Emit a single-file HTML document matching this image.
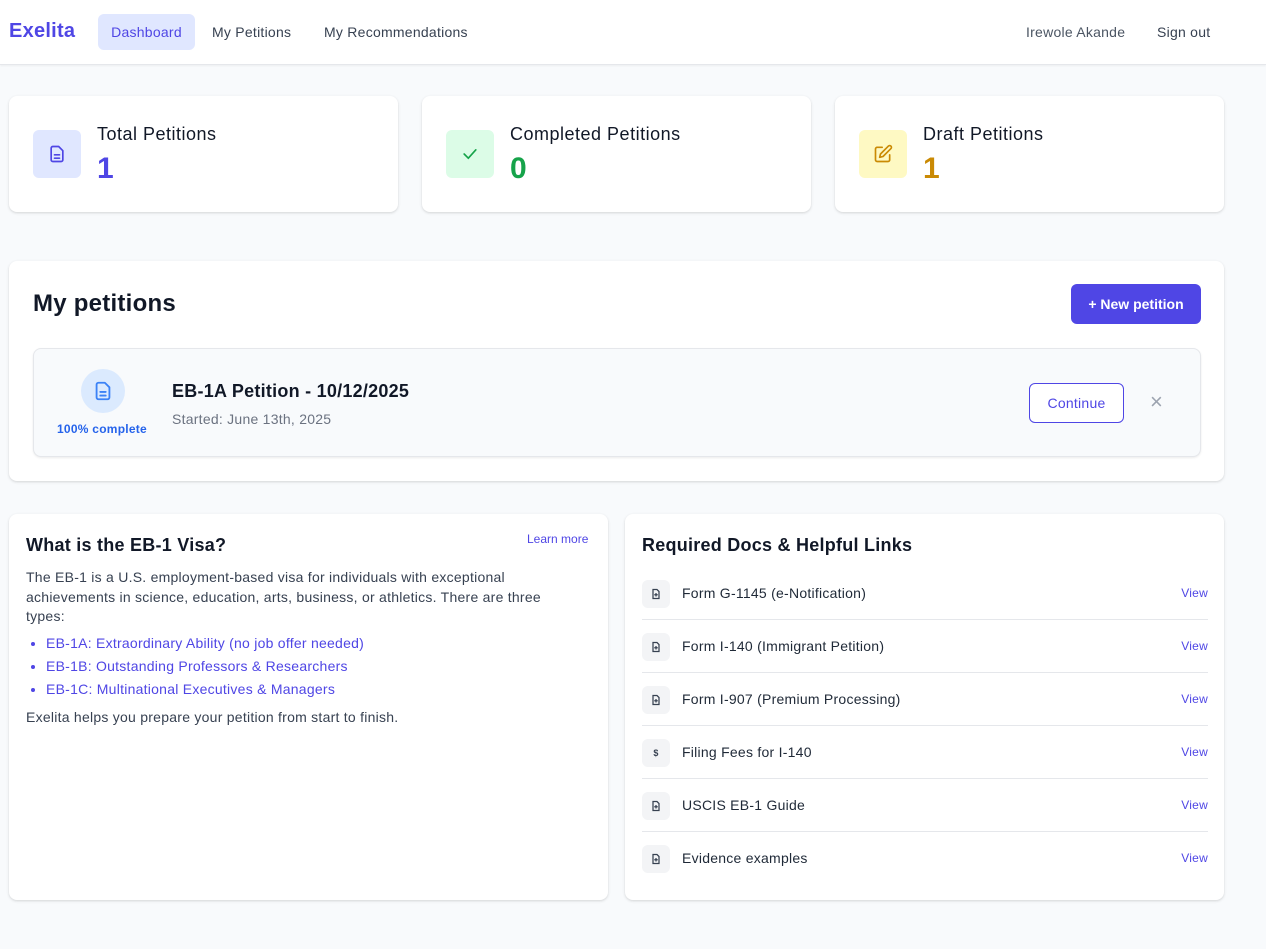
<!DOCTYPE html>
<html><head><meta charset="utf-8"><style>
*{box-sizing:border-box;margin:0;padding:0}
body{width:1266px;height:949px;background:#f8fafc;font-family:"Liberation Sans",sans-serif;color:#111827;position:relative;overflow:hidden;letter-spacing:.25px}
.nav{position:absolute;left:0;top:0;width:1266px;height:65px;background:#fff;border-bottom:1px solid #e5e7eb;box-shadow:0 1px 2px rgba(0,0,0,.05)}
.abs{position:absolute}
.card{position:absolute;background:#fff;border-radius:8px;box-shadow:0 1px 3px rgba(0,0,0,.1),0 1px 2px rgba(0,0,0,.06)}
.ico{position:absolute;width:48px;height:48px;border-radius:6px;display:flex;align-items:center;justify-content:center}
.st{position:absolute;font-size:18px;color:#111827;letter-spacing:.5px}
.sn{position:absolute;font-size:30px;font-weight:bold}
.row{position:absolute;left:642px;width:566px;height:53px;border-bottom:1px solid #e5e7eb}
.row .i{position:absolute;left:0;top:13px;width:28px;height:28px;border-radius:6px;background:#f3f4f6;display:flex;align-items:center;justify-content:center;font-size:9px;font-weight:bold;color:#374151}
.row .t{position:absolute;left:40px;top:18px;font-size:14px;color:#1f2937}
.row .v{position:absolute;right:0;top:19px;font-size:12px;color:#4f46e5}
</style></head><body>
<div class="nav">
<div class="abs" style="left:9px;top:20px;font-size:20px;font-weight:bold;color:#4f46e5">Exelita</div>
<div class="abs" style="left:98px;top:14px;width:97px;height:36px;background:#e0e7ff;border-radius:6px;color:#4f46e5;font-size:14px;text-align:center;line-height:36px">Dashboard</div>
<div class="abs" style="left:212px;top:24px;font-size:14px;color:#374151">My Petitions</div>
<div class="abs" style="left:324px;top:24px;font-size:14px;color:#374151">My Recommendations</div>
<div class="abs" style="left:1026px;top:24px;font-size:14px;color:#4b5563">Irewole Akande</div>
<div class="abs" style="left:1157px;top:24px;font-size:14px;color:#374151">Sign out</div>
</div>

<div class="card" style="left:9px;top:96px;width:389px;height:116px">
<div class="ico" style="left:24px;top:34px;background:#e0e7ff"><svg width="20" height="20" viewBox="0 0 24 24" fill="none" stroke="#4f46e5" stroke-width="2" stroke-linecap="round" stroke-linejoin="round"><path d="M14 3H7a2 2 0 0 0-2 2v14a2 2 0 0 0 2 2h10a2 2 0 0 0 2-2V8z"/><path d="M9 13h6M9 17h6"/></svg></div>
<div class="st" style="left:88px;top:28px">Total Petitions</div>
<div class="sn" style="left:88px;top:56px;color:#4f46e5">1</div></div>
<div class="card" style="left:422px;top:96px;width:389px;height:116px">
<div class="ico" style="left:24px;top:34px;background:#dcfce7"><svg width="20" height="20" viewBox="0 0 24 24" fill="none" stroke="#16a34a" stroke-width="2" stroke-linecap="round"><path d="M5 12l5 5 9-10"/></svg></div>
<div class="st" style="left:88px;top:28px">Completed Petitions</div>
<div class="sn" style="left:88px;top:56px;color:#16a34a">0</div></div>
<div class="card" style="left:835px;top:96px;width:389px;height:116px">
<div class="ico" style="left:24px;top:34px;background:#fef9c3"><svg width="20" height="20" viewBox="0 0 24 24" fill="none" stroke="#ca8a04" stroke-width="2" stroke-linecap="round" stroke-linejoin="round"><path d="M11 4H5a2 2 0 0 0-2 2v13a2 2 0 0 0 2 2h13a2 2 0 0 0 2-2v-6"/><path d="M18.5 2.5a2.1 2.1 0 0 1 3 3L12 15l-4 1 1-4z"/></svg></div>
<div class="st" style="left:88px;top:28px">Draft Petitions</div>
<div class="sn" style="left:88px;top:56px;color:#ca8a04">1</div></div>

<div class="card" style="left:9px;top:261px;width:1215px;height:220px">
<div class="abs" style="left:24px;top:29px;font-size:24px;font-weight:bold">My petitions</div>
<div class="abs" style="left:1062px;top:23px;width:130px;height:40px;background:#4f46e5;border-radius:6px;color:#fff;font-size:14px;font-weight:bold;text-align:center;line-height:40px;letter-spacing:0">+ New petition</div>
<div class="abs" style="left:24px;top:87px;width:1168px;height:109px;background:#f8fafc;border:1px solid #e5e7eb;border-radius:8px;box-shadow:0 1px 2px rgba(0,0,0,.08)">
<div class="abs" style="left:47px;top:20px;width:44px;height:44px;border-radius:50%;background:#dbeafe;display:flex;align-items:center;justify-content:center"><svg width="22" height="22" viewBox="0 0 24 24" fill="none" stroke="#3b82f6" stroke-width="2" stroke-linecap="round" stroke-linejoin="round"><path d="M14 3H7a2 2 0 0 0-2 2v14a2 2 0 0 0 2 2h10a2 2 0 0 0 2-2V8z"/><path d="M9 13h6M9 17h6"/></svg></div>
<div class="abs" style="left:23px;top:73px;font-size:12px;font-weight:bold;color:#2563eb">100% complete</div>
<div class="abs" style="left:138px;top:32px;font-size:18px;font-weight:bold">EB-1A Petition - 10/12/2025</div>
<div class="abs" style="left:138px;top:62px;font-size:14px;color:#6b7280">Started: June 13th, 2025</div>
<div class="abs" style="left:995px;top:34px;width:95px;height:40px;border:1px solid #4f46e5;border-radius:6px;color:#4f46e5;font-size:14px;text-align:center;line-height:38px;background:#fff">Continue</div>
<div class="abs" style="left:1116px;top:40px;font-size:22px;color:#9ca3af">×</div>
</div></div>

<div class="card" style="left:9px;top:514px;width:599px;height:386px">
<div class="abs" style="left:17px;top:21px;font-size:18px;font-weight:bold">What is the EB-1 Visa?</div>
<div class="abs" style="left:518px;top:18px;font-size:12px;color:#4f46e5;letter-spacing:0">Learn more</div>
<div class="abs" style="left:17px;top:54px;width:530px;font-size:14px;line-height:19.5px;color:#374151">The EB-1 is a U.S. employment-based visa for individuals with exceptional achievements in science, education, arts, business, or athletics. There are three types:</div>
<ul class="abs" style="left:37px;top:118px;font-size:14px;line-height:23px;color:#4f46e5;list-style:disc">
<li>EB-1A: Extraordinary Ability (no job offer needed)</li><li>EB-1B: Outstanding Professors &amp; Researchers</li><li>EB-1C: Multinational Executives &amp; Managers</li></ul>
<div class="abs" style="left:17px;top:195px;font-size:14px;color:#374151">Exelita helps you prepare your petition from start to finish.</div>
</div>

<div class="card" style="left:625px;top:514px;width:599px;height:386px"></div>
<div class="abs" style="left:642px;top:535px;font-size:18px;font-weight:bold">Required Docs &amp; Helpful Links</div>
<div class="row" style="top:567px"><div class="i"><svg width="12" height="12" viewBox="0 0 24 24" fill="none" stroke="#374151" stroke-width="2.5"><path d="M14 3H6v18h12V7z"/><path d="M12 10v7M8.5 13.5h7"/></svg></div><div class="t">Form G-1145 (e-Notification)</div><div class="v">View</div></div>
<div class="row" style="top:620px"><div class="i"><svg width="12" height="12" viewBox="0 0 24 24" fill="none" stroke="#374151" stroke-width="2.5"><path d="M14 3H6v18h12V7z"/><path d="M12 10v7M8.5 13.5h7"/></svg></div><div class="t">Form I-140 (Immigrant Petition)</div><div class="v">View</div></div>
<div class="row" style="top:673px"><div class="i"><svg width="12" height="12" viewBox="0 0 24 24" fill="none" stroke="#374151" stroke-width="2.5"><path d="M14 3H6v18h12V7z"/><path d="M12 10v7M8.5 13.5h7"/></svg></div><div class="t">Form I-907 (Premium Processing)</div><div class="v">View</div></div>
<div class="row" style="top:726px"><div class="i">$</div><div class="t">Filing Fees for I-140</div><div class="v">View</div></div>
<div class="row" style="top:779px"><div class="i"><svg width="12" height="12" viewBox="0 0 24 24" fill="none" stroke="#374151" stroke-width="2.5"><path d="M14 3H6v18h12V7z"/><path d="M12 10v7M8.5 13.5h7"/></svg></div><div class="t">USCIS EB-1 Guide</div><div class="v">View</div></div>
<div class="row" style="top:832px;border-bottom:none"><div class="i"><svg width="12" height="12" viewBox="0 0 24 24" fill="none" stroke="#374151" stroke-width="2.5"><path d="M14 3H6v18h12V7z"/><path d="M12 10v7M8.5 13.5h7"/></svg></div><div class="t">Evidence examples</div><div class="v">View</div></div>
</body></html>
